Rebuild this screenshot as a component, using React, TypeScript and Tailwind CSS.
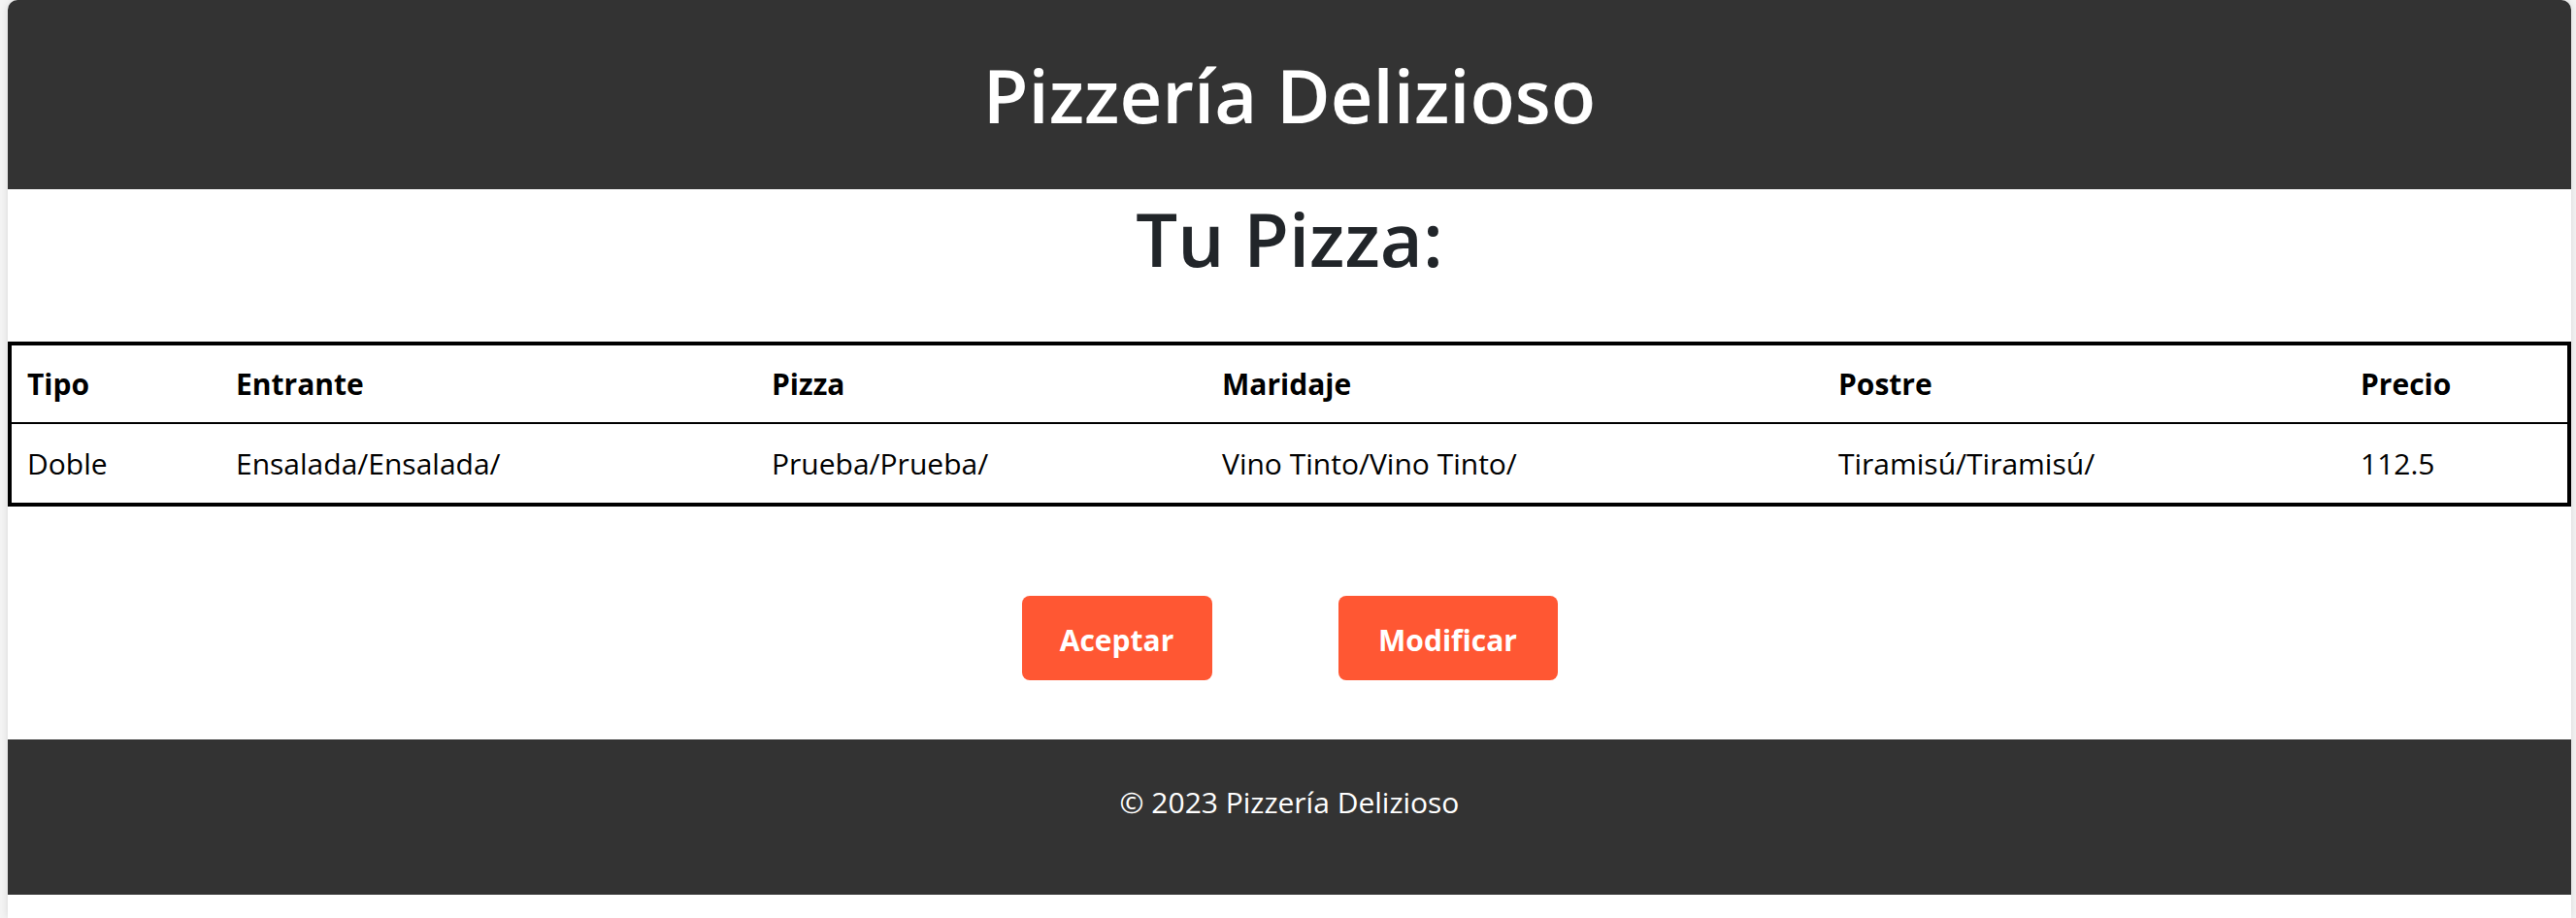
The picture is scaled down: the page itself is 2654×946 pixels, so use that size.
export default function App() {
  const cols = [
    { key: 'tipo', label: 'Tipo', value: 'Doble', w: 'w-[215px]' },
    { key: 'entrante', label: 'Entrante', value: 'Ensalada/Ensalada/', w: 'w-[552px]' },
    { key: 'pizza', label: 'Pizza', value: 'Prueba/Prueba/', w: 'w-[464px]' },
    { key: 'maridaje', label: 'Maridaje', value: 'Vino Tinto/Vino Tinto/', w: 'w-[635px]' },
    { key: 'postre', label: 'Postre', value: 'Tiramisú/Tiramisú/', w: 'w-[538px]' },
    { key: 'precio', label: 'Precio', value: '112.5', w: '' },
  ];

  return (
    <div className="min-h-screen bg-[#f4f4f4] pl-[8px] pr-[5px] font-['Open_Sans',sans-serif]">
      <div className="min-h-[946px] overflow-hidden rounded-t-[10px] bg-white shadow-[0_0_8px_rgba(0,0,0,0.12)]">
        <header className="flex h-[195px] items-center justify-center bg-[#333333]">
          <h1 className="text-[76px] font-semibold leading-none text-white">Pizzería Delizioso</h1>
        </header>

        <main>
          <h2 className="mb-[59px] mt-[4px] text-center text-[76px] font-semibold leading-[94px] text-[#212529]">
            Tu Pizza:
          </h2>

          <table className="w-full table-fixed border-separate border-spacing-0 border-4 border-black text-[30px] text-black">
            <thead>
              <tr>
                {cols.map((c) => (
                  <th
                    key={c.key}
                    className={`${c.w} h-[81px] border-b-2 border-black pl-4 text-left font-bold`}
                  >
                    {c.label}
                  </th>
                ))}
              </tr>
            </thead>
            <tbody>
              <tr>
                {cols.map((c) => (
                  <td key={c.key} className="h-[81px] pl-4 text-left">
                    {c.value}
                  </td>
                ))}
              </tr>
            </tbody>
          </table>

          <div className="mt-[92px] flex justify-center gap-[130px]">
            <button
              type="button"
              className="h-[87px] w-[196px] rounded-[8px] bg-[#ff5733] pt-[3px] text-[30px] font-bold text-white"
            >
              Aceptar
            </button>
            <button
              type="button"
              className="h-[87px] w-[226px] rounded-[8px] bg-[#ff5733] pt-[3px] text-[30px] font-bold text-white"
            >
              Modificar
            </button>
          </div>
        </main>

        <footer className="mt-[61px] h-[160px] bg-[#333333] pt-[42px] text-center text-[30px] leading-[45px] text-white">
          © 2023 Pizzería Delizioso
        </footer>
      </div>
    </div>
  );
}
